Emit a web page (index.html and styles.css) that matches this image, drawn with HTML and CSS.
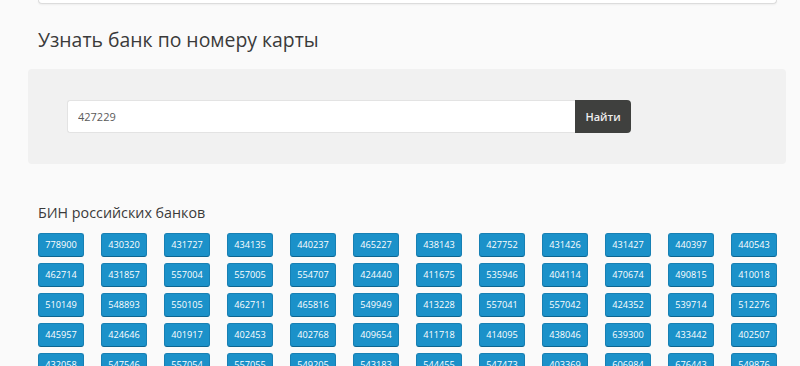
FILE: index.html
```html
<!DOCTYPE html>
<html lang="ru">
<head>
    <meta charset="UTF-8">
    <meta name="viewport" content="width=device-width, initial-scale=1.0">
    <title>Узнать банк по номеру карты</title>
    <link rel="stylesheet" href="styles.css">
</head>
<body>

    <div class="container">
        <!-- низ верхнего блока -->
        <div class="top-box"></div>

        <h2 class="page-title">Узнать банк по номеру карты</h2>

        <!-- форма поиска -->
        <div class="search-box">
            <form class="search-form" onsubmit="return false;">
                <input type="text" class="search-input" value="427229">
                <button type="submit" class="search-btn">Найти</button>
            </form>
        </div>

        <h3 class="bin-title">БИН российских банков</h3>
        <div class="bin-grid">
            <a class="bin" href="#">778900</a>
            <a class="bin" href="#">430320</a>
            <a class="bin" href="#">431727</a>
            <a class="bin" href="#">434135</a>
            <a class="bin" href="#">440237</a>
            <a class="bin" href="#">465227</a>
            <a class="bin" href="#">438143</a>
            <a class="bin" href="#">427752</a>
            <a class="bin" href="#">431426</a>
            <a class="bin" href="#">431427</a>
            <a class="bin" href="#">440397</a>
            <a class="bin" href="#">440543</a>

            <a class="bin" href="#">462714</a>
            <a class="bin" href="#">431857</a>
            <a class="bin" href="#">557004</a>
            <a class="bin" href="#">557005</a>
            <a class="bin" href="#">554707</a>
            <a class="bin" href="#">424440</a>
            <a class="bin" href="#">411675</a>
            <a class="bin" href="#">535946</a>
            <a class="bin" href="#">404114</a>
            <a class="bin" href="#">470674</a>
            <a class="bin" href="#">490815</a>
            <a class="bin" href="#">410018</a>

            <a class="bin" href="#">510149</a>
            <a class="bin" href="#">548893</a>
            <a class="bin" href="#">550105</a>
            <a class="bin" href="#">462711</a>
            <a class="bin" href="#">465816</a>
            <a class="bin" href="#">549949</a>
            <a class="bin" href="#">413228</a>
            <a class="bin" href="#">557041</a>
            <a class="bin" href="#">557042</a>
            <a class="bin" href="#">424352</a>
            <a class="bin" href="#">539714</a>
            <a class="bin" href="#">512276</a>

            <a class="bin" href="#">445957</a>
            <a class="bin" href="#">424646</a>
            <a class="bin" href="#">401917</a>
            <a class="bin" href="#">402453</a>
            <a class="bin" href="#">402768</a>
            <a class="bin" href="#">409654</a>
            <a class="bin" href="#">411718</a>
            <a class="bin" href="#">414095</a>
            <a class="bin" href="#">438046</a>
            <a class="bin" href="#">639300</a>
            <a class="bin" href="#">433442</a>
            <a class="bin" href="#">402507</a>

            <a class="bin" href="#">432058</a>
            <a class="bin" href="#">547546</a>
            <a class="bin" href="#">557054</a>
            <a class="bin" href="#">557055</a>
            <a class="bin" href="#">549205</a>
            <a class="bin" href="#">543183</a>
            <a class="bin" href="#">544455</a>
            <a class="bin" href="#">547473</a>
            <a class="bin" href="#">403369</a>
            <a class="bin" href="#">606984</a>
            <a class="bin" href="#">676443</a>
            <a class="bin" href="#">549876</a>
        </div>
    </div>

</body>
</html>
```

FILE: styles.css
```css
body {
    margin: 0;
    font-family: "Open Sans", "DejaVu Sans", sans-serif;
    background-color: #fafafa;
    color: #333;
}
.container {
    width: 739px;
    margin-left: 38px;
}
.top-box {
    height: 3px;
    background-color: #fff;
    border: 1px solid #dcdcdc;
    border-top: none;
    border-radius: 0 0 4px 4px;
    box-shadow: 0 1px 2px rgba(0, 0, 0, 0.05);
}
.page-title {
    margin: 22px 0 0;
    font-size: 19.4px;
    font-weight: 400;
    line-height: 28px;
    color: #3a3a3a;
}
.search-box {
    margin: 15px -9px 0 -10px;
    padding: 31px 39px;
    background-color: #f1f1f1;
    border-radius: 4px;
}
.search-form {
    display: flex;
}
.search-input {
    width: 508px;
    height: 33px;
    box-sizing: border-box;
    padding: 0 10px;
    border: 1px solid #e3e3e3;
    border-right: none;
    border-radius: 3px 0 0 3px;
    background-color: #fff;
    font-family: inherit;
    font-size: 11px;
    color: #5a5a5a;
    outline: none;
}
.search-btn {
    width: 56px;
    height: 33px;
    padding: 0;
    border: none;
    border-radius: 0 4px 4px 0;
    background-color: #3f403e;
    color: #eee;
    font-family: inherit;
    font-size: 11px;
    font-weight: 600;
    cursor: pointer;
}
.bin-title {
    margin: 39px 0 0;
    font-size: 14.3px;
    font-weight: 400;
    line-height: 20px;
    color: #3a3a3a;
}
.bin-grid {
    display: grid;
    grid-template-columns: repeat(12, 1fr);
    column-gap: 17px;
    row-gap: 6px;
    margin-top: 10px;
}
.bin {
    display: block;
    height: 24px;
    box-sizing: border-box;
    line-height: 22px;
    text-align: center;
    font-size: 9.2px;
    color: #fff;
    text-decoration: none;
    background-color: #1b91c9;
    border: 1px solid #1780b4;
    border-bottom-color: #0d6590;
    border-radius: 3px;
}
.bin:hover {
    background-color: #1680b3;
}
```
